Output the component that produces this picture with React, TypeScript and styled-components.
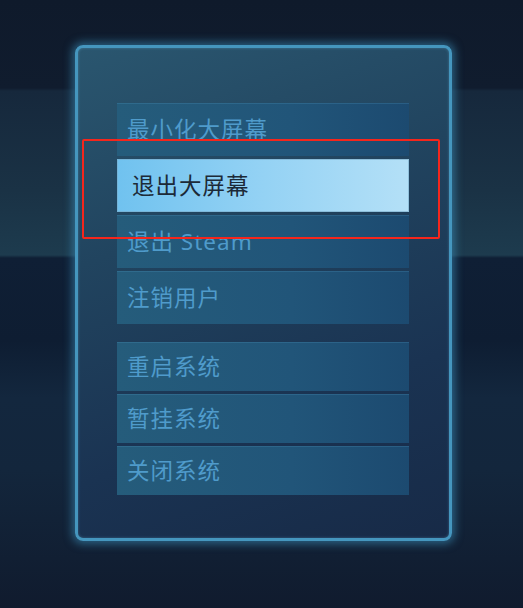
import React from "react";
import styled, { createGlobalStyle } from "styled-components";

const Global = createGlobalStyle`
  html, body { margin: 0; padding: 0; background: #101c2d; }
  * { box-sizing: border-box; }
`;

const Page = styled.div`
  position: relative;
  width: 523px;
  height: 608px;
  overflow: hidden;
  display: flex;
  justify-content: flex-start;
  align-items: flex-start;
  padding: 45px 0 0 75px;
  font-family: "Noto Sans", "Noto Sans CJK SC", sans-serif;
  background: linear-gradient(
    180deg,
    #0f1a2b 0px,
    #101c2e 88px,
    #16283c 91px,
    #1a3245 190px,
    #1d3b4e 255px,
    #0f1f35 258px,
    #0e1d32 340px,
    #13273e 398px,
    #13263c 470px,
    #101b2e 608px
  );
`;

const Panel = styled.div`
  width: 377px;
  height: 496px;
  border-radius: 8px;
  border: 3px solid #4596be;
  box-shadow: 0 0 9px 3px rgba(66, 160, 205, 0.5), inset 0 0 3px rgba(120, 200, 235, 0.35);
  background: linear-gradient(160deg, #2a566f 0%, #21445f 35%, #1a3352 70%, #172a47 100%);
  padding: 55px 40px 0 39px;
  display: flex;
  flex-direction: column;
  gap: 18px;
`;

const Group = styled.div<{ $rowHeight: number }>`
  display: grid;
  grid-auto-rows: ${(p) => p.$rowHeight}px;
  row-gap: 3px;
`;

const Row = styled.div<{ $selected?: boolean }>`
  display: flex;
  align-items: center;
  padding-left: ${(p) => (p.$selected ? 15 : 10)}px;
  padding-bottom: 3px;
  font-size: 22.5px;
  letter-spacing: 1px;
  color: ${(p) => (p.$selected ? "#1c2a38" : "#4f9bcb")};
  background: ${(p) =>
    p.$selected
      ? "linear-gradient(90deg, #70c2ef 0%, #94d2f4 50%, #b4e0f7 100%)"
      : "linear-gradient(90deg, #255c7b 0%, #215579 60%, #1c4a70 100%)"};
  box-shadow: ${(p) =>
    p.$selected
      ? "inset 0 0 0 1px rgba(120, 170, 200, 0.6)"
      : "inset 0 1px 0 rgba(80, 150, 190, 0.25)"};
`;

const Annotation = styled.div`
  position: absolute;
  left: 82px;
  top: 139px;
  width: 358px;
  height: 100px;
  border: 2.5px solid #f5261c;
  border-radius: 2px;
  pointer-events: none;
`;

const firstGroup = ["最小化大屏幕", "退出大屏幕", "退出 Steam", "注销用户"];
const secondGroup = ["重启系统", "暂挂系统", "关闭系统"];

export default function App() {
  return (
    <>
      <Global />
      <Page>
        <Panel>
          <Group $rowHeight={53}>
            {firstGroup.map((t, i) => (
              <Row key={t} $selected={i === 1}>
                {t}
              </Row>
            ))}
          </Group>
          <Group $rowHeight={49}>
            {secondGroup.map((t) => (
              <Row key={t}>{t}</Row>
            ))}
          </Group>
        </Panel>
        <Annotation />
      </Page>
    </>
  );
}
